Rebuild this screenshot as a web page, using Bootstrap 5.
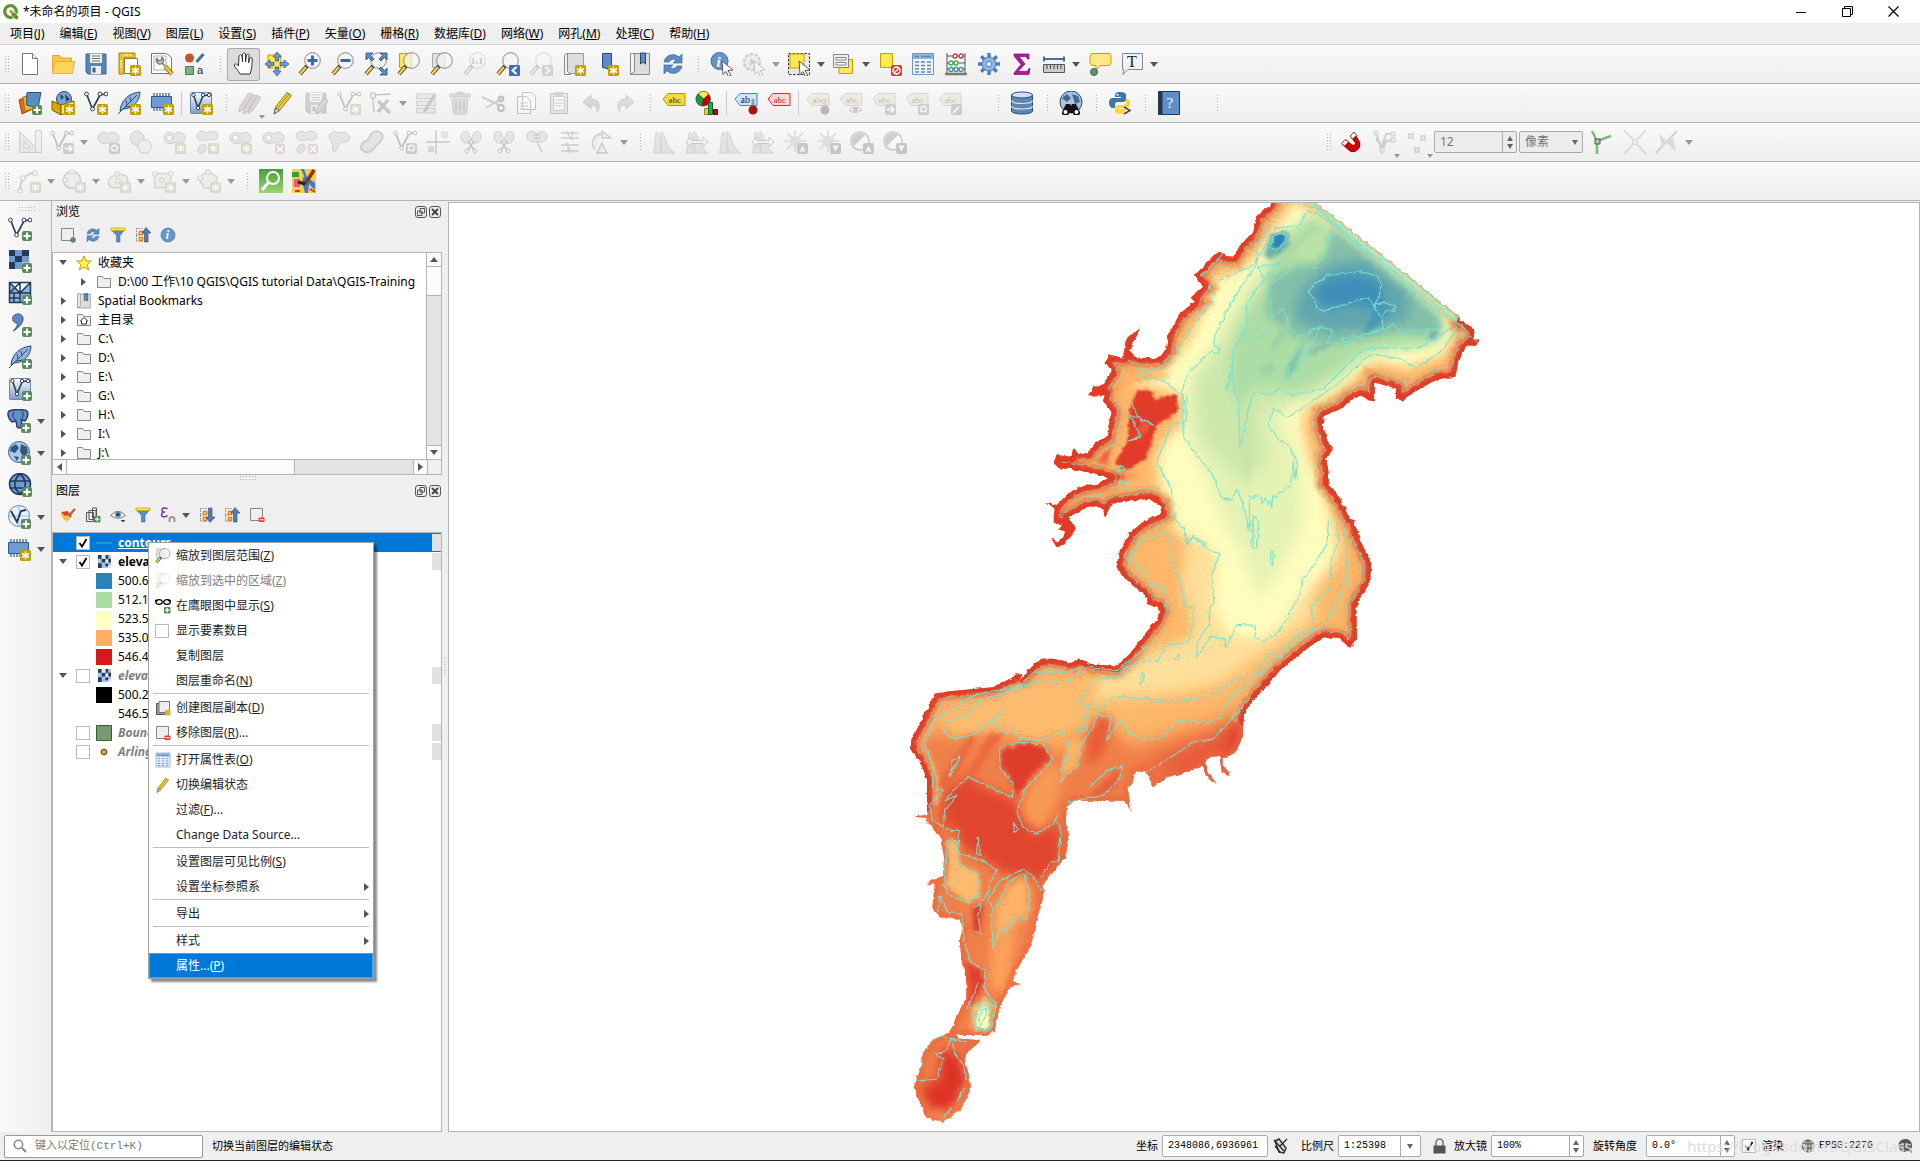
<!DOCTYPE html>
<html lang="zh-CN">
<head>
<meta charset="utf-8">
<meta name="viewport" content="width=device-width, initial-scale=1">
<title>*未命名的项目 - QGIS</title>
<link rel="stylesheet" href="https://cdn.jsdelivr.net/npm/bootstrap@5.3.0/dist/css/bootstrap.min.css">
<style>
body{font-family:"Noto Sans","Noto Sans CJK SC",sans-serif;font-size:12px;line-height:16px;color:#000;background:#efefef;overflow:hidden}
svg{display:block;flex:none}
button{color:inherit}
.title-strip{height:23px;background:#fff;padding-left:3px}
.win-btn{width:46px;height:20px;border:0;background:none}
.menu-strip{height:22px;gap:15px;padding:1px 0 0 10px;border-bottom:1px solid #d2d2d2}
.menu-strip a{color:#000;text-decoration:none}
.tool-strip{height:39px;background:linear-gradient(#fafafa,#eee);border-bottom:1px solid #b4b4b4}
.tool-set{display:flex;align-items:center}
.tool{width:33px;height:33px;border:0;background:none;padding:0;display:flex;align-items:center;justify-content:center;position:relative}
.tool.pressed{background:#dcdcdc;box-shadow:inset 0 0 0 1px #aaa;border-radius:3px}
.tool.with-menu{width:45px;justify-content:flex-start;padding-left:4px;gap:6px}
.tool svg.dim,.dim{opacity:.3;filter:grayscale(.75)}
.tri{width:0;height:0;border:4px solid transparent;border-top:5px solid #555;border-bottom:0;flex:none}
.tri.pale{border-top-color:#999}
.tri.corner{position:absolute;right:1px;bottom:1px;border-width:3px;border-top-width:4px;border-bottom:0}
.grip{width:16px;height:18px;background:radial-gradient(circle,#b0b0b0 1px,transparent 1px) 8px 0/3px 3px;background-clip:content-box;padding:0 4px 0 8px;flex:none}
.grip.first{width:13px;padding:0 4px 0 4px;background-position:4px 0}
.bar-gap{width:6px;height:24px;border-left:1px solid #ccc;margin-left:3px;margin-right:-3px;flex:none}
.tool-space{width:23px;flex:none}
.snap-set{margin-left:411px}
.spin-box{height:22px;border:1px solid #aaa;border-radius:2px;background:#fff;display:flex;align-items:stretch;overflow:hidden}
.spin-box input,.spin-box select{border:0;background:none;padding:0 0 0 5px;min-width:0;flex:1;outline:0;appearance:none;color:inherit;font-size:inherit}
.spin-box .ends{width:14px;border-left:1px solid #aaa;display:flex;flex-direction:column;align-items:center;justify-content:center;gap:3px;flex:none}
.spin-box .ends i{width:0;height:0;border:3px solid transparent;border-top:5px solid #666;border-bottom:0}
.spin-box .ends i:first-child:not(:last-child){border-top:0;border-bottom:5px solid #666}
.snap-set .spin-box{background:#ececec;color:#777;margin-right:2px}
.w-snap{width:83px}.w-unit{width:64px}
.w-unit .ends{border:0}
.side-strip{width:52px;background:linear-gradient(90deg,#fafafa,#eee);border-right:1px solid #b4b4b4;padding:12px 0 0 3px;position:relative}
.side-strip .tool{height:32px}
.hgrip{width:17px;height:5px;background:radial-gradient(circle,#b0b0b0 1px,transparent 1px) 0 0/3px 3px}
.side-strip .hgrip{position:absolute;left:18px;top:5px}
.docks{width:390px}
.dock-title{height:21px;padding:0 1px 0 4px}
.dock-title button{border:0;background:none;padding:0;margin-left:2px}
.dock-tools{height:26px;padding-left:8px;gap:9px;margin-bottom:4px}
.dock-tools.tall{height:28px;margin-bottom:3px}
.dock-tools button{border:0;background:none;padding:0;display:flex;align-items:center;gap:2px}
.tree-frame{border:1px solid #b4b4b4;background:#fff}
.tree-browser{height:223px}
.tree-row{height:19px;display:flex;align-items:center;white-space:nowrap}
.twist{width:20px;display:flex;justify-content:center;flex:none}
.twist:before{content:"";border:4px solid transparent;border-left:5px solid #555;border-right:0}
.twist.open:before{border:4px solid transparent;border-top:5px solid #555;border-bottom:0}
.twist.leaf:before{content:none}
.tree-row svg{margin:0 6px 0 3px}
.scroll-v{width:15px;background:#e4e4e4;border-left:1px solid #b4b4b4}
.scroll-h{height:15px;background:#e4e4e4;border-top:1px solid #b4b4b4}
.sb{background:#fafafa;width:14px;height:14px;display:flex;align-items:center;justify-content:center;flex:none}
.sb:before{content:"";border:4px solid transparent}
.sb.up{border-bottom:1px solid #b4b4b4}.sb.up:before{border-bottom:5px solid #555;border-top:0}
.sb.down{border-top:1px solid #b4b4b4}.sb.down:before{border-top:5px solid #555;border-bottom:0}
.sb.lf{border-right:1px solid #b4b4b4}.sb.lf:before{border-right:5px solid #555;border-left:0}
.sb.rt{border-left:1px solid #b4b4b4}.sb.rt:before{border-left:5px solid #555;border-right:0}
.sb-corner{width:14px;background:#efefef;border-left:1px solid #b4b4b4}
.thumb-v{height:29px;background:#fbfbfb;border-bottom:1px solid #b4b4b4}
.thumb-h{width:228px;background:#fbfbfb;border-right:1px solid #b4b4b4}
.tick{appearance:none;width:14px;height:14px;margin:0;border:1px solid #b8b8b8;background:#fff;flex:none}
.tick:checked{background:#fff url("data:image/svg+xml,%3Csvg xmlns='http://www.w3.org/2000/svg' viewBox='0 0 12 12'%3E%3Cpath d='M2.5 6l2.5 3.5L9.500 2' fill='none' stroke='%23000' stroke-width='1.800'/%3E%3C/svg%3E")}
.layer-row{height:19px;display:flex;align-items:center;white-space:nowrap}
.layer-row .tick{margin:0 6px 0 3px}
.layer-row .wide-ico{margin-right:6px}
.layer-row .small-ico{margin:0 7px 0 2px}
.layer-row .flagbox{width:9px;height:17px;background:#e2e2e2;margin-left:auto}
.layer-row.on{background:#0078d7;color:#fff;box-shadow:inset -1px 0 #2a8fe8}
.swatch{width:16px;height:16px;margin:0 6px 0 43px;flex:none}
.off-layer{color:#808080;font-weight:700;font-style:italic}
.ctx{position:absolute;left:95px;top:9px;width:226px;display:block;border:1px solid #a0a0a0;border-radius:0;padding:0;margin:0;font-size:12px;box-shadow:3px 3px 2px rgba(0,0,0,.45);background:#fff;z-index:5}
.ctx button{height:25px;width:100%;border:0;background:none;display:flex;align-items:center;padding:0 4px 0 6px;text-align:left}
.ctx .slot{width:16px;margin-right:5px;flex:none}
.ctx hr{margin:0 4px 1px;border-top:1px solid #bdbdbd;opacity:1}
.ctx button.hot{background:#0078d7;color:#fff;box-shadow:inset 0 0 0 1px #3ba3f5}
.ctx .sub{margin-left:auto;border:4px solid transparent;border-left:5px solid #555;border-right:0}
.splitter{width:6px;display:flex;align-items:center;justify-content:center}
.canvas-frame{border:1px solid #b4b4b4;background:#fff;min-width:0;margin-top:1px}
.work-area{min-height:0}
.status-strip{height:29px;padding-left:4px;border-bottom:1px solid #1d2b2b;font-size:11px;position:relative;color:#000}
.status-strip .val{font-family:"Liberation Mono","Noto Sans CJK SC",monospace;font-size:10px}
.find-box{width:199px;height:23px;border:1px solid #999;border-radius:2px;background:#fff;gap:8px;padding-left:8px}
.find-box input{border:0;outline:0;background:none;padding:0;width:150px;font:11px/16px "Liberation Mono","Noto Sans CJK SC",monospace}
.find-box input::placeholder{color:#777;opacity:1}
.w-coord{width:106px}.w-scale{width:83px}.w-scale .ends{width:20px!important}.w-mag{width:93px}.w-rot{width:89px}
.mark-text{position:absolute;right:8px;top:4px;font-size:15px;line-height:20px;color:rgba(190,190,190,.55);text-shadow:0 0 1px #fff;pointer-events:none}
</style>
</head>
<body class="vh-100 d-flex flex-column">

<svg width="0" height="0" class="position-absolute" aria-hidden="true"><defs>
<linearGradient id="bl" x1="0" y1="0" x2="0" y2="1"><stop offset="0" stop-color="#fff"/><stop offset="1" stop-color="#7a9cc6"/></linearGradient>
<linearGradient id="gn" x1="0" y1="0" x2="0" y2="1"><stop offset="0" stop-color="#4f9a3a"/><stop offset="1" stop-color="#9ad672"/></linearGradient>
<symbol id="star" viewBox="0 0 24 24"><rect x="13" y="13" width="11" height="11" rx="1.500" fill="#c4a000"/><path d="M18.500 14.500v8M15 16.500l7 4M22 16.500l-7 4" stroke="#fff" stroke-width="1.500"/></symbol>
<symbol id="plus" viewBox="0 0 24 24"><rect x="14" y="14" width="10" height="10" rx="2" fill="#5a8c5a"/><path d="M19 15.500v7M15.500 19h7" stroke="#fff" stroke-width="2"/></symbol>
<symbol id="del" viewBox="0 0 24 24"><rect x="14" y="14" width="10" height="10" rx="2" fill="#d88"/><path d="M16 16l6 6M22 16l-6 6" stroke="#fff" stroke-width="2"/></symbol>
<symbol id="bl1" viewBox="0 0 24 24"><rect x="13" y="13" width="11" height="11" rx="1" fill="#3f73b0"/><path d="M20.500 15l-4 3.500 4 3.500" fill="none" stroke="#fff" stroke-width="2"/></symbol>
<symbol id="br1" viewBox="0 0 24 24"><rect x="13" y="13" width="11" height="11" rx="1" fill="#888"/><path d="M16.500 15l4 3.500-4 3.500" fill="none" stroke="#fff" stroke-width="2"/></symbol>
<symbol id="mv" viewBox="0 0 24 24"><rect x="13" y="13" width="11" height="11" rx="2" fill="#777"/><path d="M14.500 18.500h7M19 15.500l3 3-3 3" fill="none" stroke="#fff" stroke-width="1.800"/></symbol>
<symbol id="rot" viewBox="0 0 24 24"><rect x="13" y="13" width="11" height="11" rx="2" fill="#777"/><path d="M17 21a3 3 0 1 1 3 0M20 21l-3-1" fill="none" stroke="#fff" stroke-width="1.600"/></symbol>
<symbol id="upb" viewBox="0 0 24 24"><rect x="13" y="13" width="11" height="11" rx="2" fill="#666"/><path d="M18.500 15.500l3 6h-6z" fill="#fff"/></symbol>
<symbol id="dnb" viewBox="0 0 24 24"><rect x="13" y="13" width="11" height="11" rx="2" fill="#666"/><path d="M18.500 21.500l3-6h-6z" fill="#fff"/></symbol>
<symbol id="no" viewBox="0 0 24 24"><rect x="13" y="13" width="11" height="11" rx="2" fill="#d33"/><circle cx="18.500" cy="18.500" r="3.500" fill="none" stroke="#fff" stroke-width="1.500"/><path d="M16 21l5-5" stroke="#fff" stroke-width="1.500"/></symbol>
<symbol id="cur" viewBox="0 0 24 24"><path d="M12 9l11 9-5 .5 3 5-2.500 1-2.500-5-3 3z" fill="#fff" stroke="#555"/></symbol>
<symbol id="pen1" viewBox="0 0 24 24"><rect x="13" y="13" width="11" height="11" rx="2" fill="#777"/><path d="M15 22l6-6" stroke="#fff" stroke-width="2"/></symbol>
<symbol id="pen2" viewBox="0 0 24 24"><path d="M12 23l1-6 7-10 4 3-7 10z" fill="#999" stroke="#444"/></symbol>
<symbol id="eye1" viewBox="0 0 24 24"><path d="M10 19q6-6 13 0-7 5-13 0z" fill="#fff" stroke="#555"/><circle cx="16.500" cy="18.500" r="2.500" fill="#667"/></symbol>
<symbol id="thm" viewBox="0 0 24 24"><path d="M19 8v8" stroke="#999" stroke-width="3"/><circle cx="19" cy="19" r="4.500" fill="#a11"/></symbol>

<symbol id="page" viewBox="0 0 24 24"><path d="M4.500 1.500h10l5 5v16h-15z" fill="#fff" stroke="#777"/><path d="M14.500 1.500v5h5" fill="#eee" stroke="#777"/></symbol>
<symbol id="open" viewBox="0 0 24 24"><path d="M1.500 21V3.500h7l2 2.500h10v4" fill="#f6c744" stroke="#e0ac2b"/><path d="M1.500 21.500l3-12h19l-2 12z" fill="#ffd65c" stroke="#e5b53a"/></symbol>
<symbol id="save" viewBox="0 0 24 24"><path d="M2 2h20v20H4l-2-2z" fill="#5b84b1" stroke="#3d6392"/><path d="M6 2h12v9H6z" fill="#f4f4f4"/><path d="M7.500 4h9M7.500 6.500h9M7.500 9h9" stroke="#777"/><path d="M7 14h10v8H7z" fill="#eee"/><path d="M8.500 15.500h3v5h-3z" fill="#3d6392"/></symbol>
<symbol id="lay" viewBox="0 0 24 24"><path d="M7.500 6.500h13v15h-13z" fill="#fff" stroke="#777"/><path d="M2 1h16v5H7v16H2z" fill="#e9c334" stroke="#a98600"/><path d="M7 2v2M10 2v2M13 2v2M3 9h2M3 12h2M3 15h2" stroke="#fff"/></symbol>
<symbol id="rep" viewBox="0 0 24 24"><path d="M1.500 1.500h15l5 4v16h-20z" fill="#fff" stroke="#777"/><path d="M4 4h12v14H4z" fill="none" stroke="#9bb4d4"/><path d="M7 6.500a3.500 3.500 0 1 0 5-1l-1 3-2.500.5zM12 11l4 4" fill="#ddd" stroke="#777" stroke-width="1.500"/><path d="M15 14l7 8" stroke="#8a6a10" stroke-width="4.500"/><path d="M15 14l7 8" stroke="#e9c334" stroke-width="3"/></symbol>
<symbol id="sty" viewBox="0 0 24 24"><circle cx="6.500" cy="6" r="4.500" fill="#c8502b"/><path d="M13.500 10l7-8" stroke="#44719f" stroke-width="3"/><path d="M2.500 14.500h8v8h-8z" fill="#7fb082" stroke="#4a7a4c"/><text x="14" y="22" font-size="11" font-family="Liberation Sans" fill="#222">a</text></symbol>
<symbol id="hand" viewBox="0 0 24 24"><path d="M8 22c-2-4-5-6-6-9 1-2 3-1 4.500 1L7 4c1-2 3-1 3 0l.5 6V2c1-1.500 3-1 3 0v8l1-7c1-1.500 3-1 2.500.5L16.500 11l1.500-5c1-1 2.500-.5 2.300.8C20 12 20 17 18 22z" fill="#fff" stroke="#333"/></symbol>
<symbol id="pan" viewBox="0 0 24 24"><path d="M3 3h13v13H3z" fill="#fce94f" stroke="#c4a000"/><path d="M12 0l4 5h-2.500v4h-3V5H8zM12 24l4-5h-2.500v-4h-3v4H8zM0 12l5-4v2.500h4v3H5V16zM24 12l-5-4v2.500h-4v3h4V16z" fill="#6f9bd0" stroke="#30588c" stroke-width=".8"/></symbol>
<symbol id="lens" viewBox="0 0 24 24"><path d="M9 14l-7 8" stroke="#333" stroke-width="4"/><path d="M8 15l-6 7" stroke="#fcd04b" stroke-width="2.500"/><circle cx="14.500" cy="8.500" r="7.800" fill="#f4f4f4" fill-opacity=".7" stroke="#888"/></symbol>
<symbol id="zin" viewBox="0 0 24 24"><path d="M14.500 3.500v10M9.500 8.500h10" stroke="#2f6bb0" stroke-width="3"/></symbol>
<symbol id="zout" viewBox="0 0 24 24"><path d="M9.500 8.500h10" stroke="#2f6bb0" stroke-width="3"/></symbol>
<symbol id="z11" viewBox="0 0 24 24"><text x="8" y="12" font-size="9" font-family="Liberation Serif" font-weight="700" fill="#444">1:1</text></symbol>
<symbol id="full" viewBox="0 0 24 24"><path d="M2 1h7L6.500 3.500 10 7 8 9 4.500 5.500 2 8zM23 1v7l-2.500-2.500L17 9l-2-2 3.500-3.500L16 1zM23 23h-7l2.500-2.500L15 17l2-2 3.500 3.500L23 16z" fill="#5d8cc4" stroke="#244b78" stroke-width=".8"/></symbol>
<symbol id="ysq" viewBox="0 0 24 24"><path d="M2.500 1.500h12v14h-12z" fill="#fce94f" stroke="#c4a000"/></symbol>
<symbol id="gsq" viewBox="0 0 24 24"><path d="M2.500 1.500h12v14h-12z" fill="#e2e2e2" stroke="#aaa"/></symbol>
<symbol id="map" viewBox="0 0 24 24"><path d="M5.500 1.500h16v20h-16z" fill="#ddd" stroke="#999"/><path d="M2.500 3.500q0-2 3-2v18l3 3h-6z" fill="#f4f4f4" stroke="#888"/></symbol>
<symbol id="bkm" viewBox="0 0 24 24"><path d="M7.500 1.500h9v19l-4.500-4-4.500-1z" fill="#5d8cc4" stroke="#244b78"/></symbol>
<symbol id="book" viewBox="0 0 24 24"><path d="M2.500 1.500h19v21h-19z" fill="#ddd" stroke="#888"/><path d="M2.500 1.500h4v18l-4 3z" fill="#f4f4f4" stroke="#888"/><path d="M12.500 1v11l2.500-2 2.500 2V1z" fill="#5d8cc4" stroke="#244b78"/></symbol>
<symbol id="ref" viewBox="0 0 24 24"><path d="M3 10A9 9 0 0 1 18 5l3-3v9h-9l3-3a5 5 0 0 0-7 2zM21 14a9 9 0 0 1-15 5l-3 3v-9h9l-3 3a5 5 0 0 0 7-2z" fill="#5d8cc4" stroke="#3d6ca5" stroke-width=".7"/></symbol>
<symbol id="info" viewBox="0 0 24 24"><circle cx="9.500" cy="9" r="8.500" fill="#6795c8" stroke="#3d6ca5"/><text x="6.500" y="14.500" font-size="15" font-style="italic" font-weight="700" font-family="Liberation Serif" fill="#fff">i</text></symbol>
<symbol id="infoc" viewBox="0 0 24 24"><circle cx="12" cy="12" r="10.500" fill="#6795c8" stroke="#3d6ca5"/><text x="8.500" y="18.500" font-size="18" font-style="italic" font-weight="700" font-family="Liberation Serif" fill="#fff">i</text></symbol>
<symbol id="act" viewBox="0 0 24 24"><circle cx="10" cy="10" r="8" fill="#ddd" stroke="#777" stroke-width="2.500" stroke-dasharray="3.500 1.500"/><path d="M8 6l6 4-6 4z" fill="#777"/></symbol>
<symbol id="sel" viewBox="0 0 24 24"><path d="M1.500 1.500h21v21h-21z" fill="#e8e8e8" stroke="#333" stroke-dasharray="2.500 1.500"/><path d="M3 2h14v14H3z" fill="#fce94f" stroke="#c4a000"/></symbol>
<symbol id="form" viewBox="0 0 24 24"><path d="M7 7.500h13.500v14H7z" fill="#fce94f" stroke="#c4a000"/><path d="M1.500 2.500h15v13h-15z" fill="#eee" stroke="#888"/><path d="M4 5.500h10v2.500H4zM4 10.500h10V13H4z" fill="#fff" stroke="#888"/></symbol>
<symbol id="tab" viewBox="0 0 24 24"><path d="M1.500 1.500h21v21h-21z" fill="#eef4fb" stroke="#6795c8"/><path d="M2 2h20v5H2z" fill="#8fb5df"/><path d="M4 10h4M10 10h4M16 10h4M4 13.500h4M10 13.500h4M16 13.500h4M4 17h4M10 17h4M16 17h4M4 20h4M10 20h4M16 20h4M4 4.500h4M10 4.500h10" stroke="#5d86b5" stroke-width="1.300"/></symbol>
<symbol id="aba" viewBox="0 0 24 24"><path d="M3 1v21M21 1v21M3 4h18M3 11h18M3 17h18" stroke="#555" fill="none"/><path d="M1 22h22" stroke="#777" stroke-width="2.500"/><g fill="#fff" stroke-width="1.300"><g stroke="#c33"><circle cx="11" cy="4" r="2"/><circle cx="17" cy="4" r="2"/></g><g stroke="#4a4"><circle cx="7" cy="11" r="2"/><circle cx="12" cy="11" r="2"/></g><g stroke="#48a"><circle cx="7" cy="17.500" r="2"/><circle cx="12" cy="17.500" r="2"/><circle cx="17" cy="17.500" r="2"/></g></g></symbol>
<symbol id="gear" viewBox="0 0 24 24"><path d="M12 1v22M1 12h22M4.200 4.200l15.600 15.600M19.800 4.200L4.200 19.800" stroke="#4f7fb8" stroke-width="3.500"/><circle cx="12" cy="12" r="7" fill="#8db3df" stroke="#4f7fb8"/><circle cx="12" cy="12" r="2.500" fill="#fff" stroke="#4f7fb8"/></symbol>
<symbol id="sig" viewBox="0 0 24 24"><path d="M4 2h15v5h-1.500L16 4.500H9L15 12l-7 7.500h9l2-3h1L19 22.500H4V21l7-8.500L4 4z" fill="#b5179e" stroke="#7a0f6b" stroke-width=".7"/></symbol>
<symbol id="rul" viewBox="0 0 24 24"><path d="M2 7h20M2 4.500v5M22 4.500v5" stroke="#446e9e" stroke-width="2"/><path d="M1.500 12.500h21v8h-21z" fill="#ccc" stroke="#555"/><path d="M5 13v4M8.500 13v4M12 13v4M15.500 13v4M19 13v4" stroke="#444"/></symbol>
<symbol id="tip" viewBox="0 0 24 24"><path d="M5 1.500h16q2 0 2 2v7q0 3-3 3h-8l-4 5v-5H5q-3 0-3-3v-6q0-3 3-3z" fill="#fce986" stroke="#c4a000"/><circle cx="6" cy="20" r="3.500" fill="#5f9560" stroke="#466"/></symbol>
<symbol id="txt" viewBox="0 0 24 24"><path d="M2.500 1.500h20v16H8l-5 5 1-5H2.500z" fill="#edf3fa" stroke="#888"/><text x="7" y="15" font-size="16" font-family="Liberation Serif" fill="#222">T</text></symbol>

<symbol id="dsm" viewBox="0 0 24 24"><path d="M1 9l10-5 4 14-11 5z" fill="#d96d1b" stroke="#a04c0f"/><path d="M5 6l10-3 3 14-11 3z" fill="#f0b429" stroke="#a87b10"/><path d="M9 1.500h14L20 17 8.500 14z" fill="#5d8cc4" stroke="#2c5383"/></symbol>
<symbol id="pkg" viewBox="0 0 24 24"><circle cx="13" cy="8" r="7.500" fill="#7da3d0" stroke="#446"/><path d="M9 3l4 3-3 3zM14 3l5 5-4 3z" fill="#244b78"/><path d="M1 10l9 4v10l-9-5z" fill="#d8a800" stroke="#7a6000"/><path d="M10 14l13-4v9l-13 5z" fill="#fce94f" stroke="#7a6000"/></symbol>
<symbol id="vee" viewBox="0 0 24 24"><path d="M2.500 3l6 15L16 4l6-1" fill="none" stroke="#2c4257" stroke-width="1.700"/><g fill="#fff" stroke="#2c4257"><circle cx="2.500" cy="3" r="1.900"/><circle cx="8.500" cy="18" r="1.900"/><circle cx="16" cy="3" r="1.900"/><circle cx="22" cy="3" r="1.900"/></g></symbol>
<symbol id="fea" viewBox="0 0 24 24"><path d="M3 20C4 9 12 2 23 1c0 8-6 17-17 17z" fill="#8fb3dc" stroke="#2c4f78"/><path d="M1 23L20 4M9 9l1 5M13 6l1 5M8 16l7-1" fill="none" stroke="#2c4f78"/></symbol>
<symbol id="chip" viewBox="0 0 24 24"><path d="M4 2v18M7 2v18M10 2v18M13 2v18M16 2v18M19 2v18" stroke="#466c97" stroke-width="1.400"/><path d="M1.500 5.500h20v11h-20z" fill="#6f9bd0" stroke="#30588c"/></symbol>
<symbol id="vbox" viewBox="0 0 24 24"><rect x="1.500" y="1.500" width="21" height="21" rx="1" fill="url(#bl)" stroke="#6688ae"/><path d="M4.500 4l4.500 13L14 5l6-1.500" fill="none" stroke="#2c4257" stroke-width="1.600"/><g fill="#fff" stroke="#2c4257"><circle cx="4.500" cy="4" r="1.700"/><circle cx="9" cy="17" r="1.700"/><circle cx="14" cy="4" r="1.700"/><circle cx="20" cy="4" r="1.700"/></g></symbol>
<symbol id="pen" viewBox="0 0 24 24"><path d="M3 23l1.500-7L16 1.500l4.500 3L9 19z" fill="#e8cf3c" stroke="#8c7a1a"/><path d="M6.500 17.500L18 3" stroke="#a38d16"/><path d="M3 23l1.500-6 4 2.500z" fill="#ddd" stroke="#666"/></symbol>
<symbol id="pens" viewBox="0 0 24 24"><path d="M1 21l1-6L11 1.500l4 2.500L6 18zM5 23l1-6L15 3l4 2.500L10 20zM10 23l1-6L19 4l4 2.500L15 19z" fill="#b88" stroke="#755"/></symbol>
<symbol id="vtx" viewBox="0 0 24 24"><path d="M5 21L3.500 4l18-1" fill="none" stroke="#555" stroke-width="1.300"/><path d="M1.500 2h5v5h-5z" fill="#ddd" stroke="#555"/><path d="M9 10l12 12M19 9L9 21" stroke="#666" stroke-width="3.500"/></symbol>
<symbol id="att" viewBox="0 0 24 24"><path d="M1.500 3h19v4.500h-19zM1.500 10h19v4.500h-19zM1.500 17h19v5h-19z" fill="#bda" stroke="#776"/><path d="M9 21L20 3" stroke="#666" stroke-width="3"/></symbol>
<symbol id="bin" viewBox="0 0 24 24"><path d="M4 8h16l-1.500 15h-13z" fill="#baa" stroke="#866"/><path d="M2 3h20v3H2zM9 1h6v2H9z" fill="#b99" stroke="#866"/><path d="M8 10v10M12 10v10M16 10v10" stroke="#855" stroke-width="1.500"/></symbol>
<symbol id="cut" viewBox="0 0 24 24"><path d="M1 6l17 8M5 17L22 7" stroke="#777" stroke-width="2"/><circle cx="20" cy="17" r="3" fill="none" stroke="#444" stroke-width="1.800"/><circle cx="20" cy="8" r="2.500" fill="none" stroke="#444" stroke-width="1.800"/></symbol>
<symbol id="cpy" viewBox="0 0 24 24"><path d="M8.500 1.500h9l4 4v13h-13zM3.500 5.500h9l4 4v13h-13z" fill="#fff" stroke="#555"/><path d="M6 12h8M6 15h8M6 18h8" stroke="#777"/></symbol>
<symbol id="pst" viewBox="0 0 24 24"><path d="M3.500 2.500h17v20h-17z" fill="#ccc" stroke="#555"/><path d="M6.500 5.500h11v14h-11z" fill="#fff" stroke="#777"/><path d="M8 1h8v4H8z" fill="#888"/><path d="M8 9h8M8 12h8M8 15h6" stroke="#777"/></symbol>
<symbol id="undo" viewBox="0 0 24 24"><path d="M3 11l8-7v4c9 0 10 7 6 13 1-6-2-7-6-7v4z" fill="#b98a70" stroke="#865"/></symbol>
<symbol id="redo" viewBox="0 0 24 24"><path d="M21 11l-8-7v4C4 8 3 15 7 21c-1-6 2-7 6-7v4z" fill="#9a9" stroke="#686"/></symbol>
<symbol id="abc" viewBox="0 0 24 24"><path d="M1 8l5-5.500h17v12H6z" fill="#f5dc3e" stroke="#b39600"/><text x="6.500" y="12" font-size="9" font-family="Liberation Serif" fill="#333">abc</text></symbol>
<symbol id="abb" viewBox="0 0 24 24"><path d="M1 8l5-5.500h17v12H6z" fill="#cfe4ff" stroke="#3f86d8"/><text x="6.500" y="12" font-size="10" font-family="Liberation Serif" fill="#223">ab</text></symbol>
<symbol id="abr" viewBox="0 0 24 24"><path d="M1 8l5-5.500h17v12H6z" fill="#ffd6d6" stroke="#e22"/><text x="6.500" y="12" font-size="9" font-family="Liberation Serif" fill="#c22">abc</text></symbol>
<symbol id="pie" viewBox="0 0 24 24"><circle cx="8.500" cy="8" r="7" fill="#c00" stroke="#333" stroke-width=".6"/><path d="M8.500 8L3 3a7 7 0 0 1 11 0z" fill="#fce94f" stroke="#333" stroke-width=".6"/><path d="M8.500 8L3 3a7 7 0 0 0 4 12z" fill="#1a9c3c" stroke="#333" stroke-width=".6"/><path d="M9.500 17.500h4v6h-4z" fill="#fcd000" stroke="#975"/><path d="M13.500 11.500h4v12h-4z" fill="#1ab33c" stroke="#063"/><path d="M18.500 18.500h4v5h-4z" fill="#c00" stroke="#600"/></symbol>
<symbol id="db" viewBox="0 0 24 24"><path d="M1.500 4v16c0 4 21 4 21 0V4z" fill="#5f86b3" stroke="#2f4f75"/><path d="M1.500 9.500c0 4 21 4 21 0M1.500 15c0 4 21 4 21 0" fill="none" stroke="#dce8f5" stroke-width="1.200"/><ellipse cx="12" cy="4" rx="10.500" ry="3" fill="#cfdff0" stroke="#2f4f75"/></symbol>
<symbol id="msr" viewBox="0 0 24 24"><circle cx="12" cy="11" r="11" fill="#a9c3e2" stroke="#345"/><path d="M3 7l5-4 4 4-4 4zM13 3l6 2 2 6-5 2zM4 13l4 2" fill="#44678f"/><path d="M7 13h4l1 2 1-2h4l4 8a3.500 3.500 0 1 1-7 1h-4a3.500 3.500 0 1 1-7-1z" fill="#111"/><circle cx="6.500" cy="21" r="2" fill="#fff"/><circle cx="17.500" cy="21" r="2" fill="#fff"/></symbol>
<symbol id="py" viewBox="0 0 24 24"><path d="M12 1c-5 0-5 2-5 5h6v1H4c-4 0-4 9 0 10h3v-3c0-3 2-3 4-3h4c2 0 3-1 3-3V4c0-2-2-3-6-3z" fill="#3c77ac"/><path d="M12 23c5 0 5-2 5-5h-6v-1h8c4 0 4-8 1-9h-2v3c0 3-2 3-4 3h-4c-2 0-3 1-3 3v3c0 2 2 3 5 3z" fill="#ffd23f"/><circle cx="9.500" cy="3.800" r="1" fill="#fff"/><path d="M16 16l6 3.500-6 3.500" fill="none" stroke="#444" stroke-width="1.500"/></symbol>
<symbol id="help" viewBox="0 0 24 24"><path d="M1.500.5h21v23h-21z" fill="#5f8fc8" stroke="#233a55"/><path d="M1.500.5h4v23h-4z" fill="#24384f"/><text x="9.500" y="17" font-size="15" font-family="Liberation Serif" fill="#fff">?</text></symbol>

<symbol id="tri" viewBox="0 0 24 24"><path d="M1.500 1.500v21h21z" fill="#dcc9bb" stroke="#876"/><path d="M6 12v6h6z" fill="#fff" stroke="#876"/><path d="M17.500.5h6v22h-6z" fill="#eee0c0" stroke="#876"/></symbol>
<symbol id="bean" viewBox="0 0 24 24"><path d="M2 8c0-6 7-7 10-4 4-3 11-2 11 4 0 5-6 6-9 4-4 3-12 2-12-4z" fill="#b9c6b4" stroke="#6c7a68"/></symbol>
<symbol id="ringb" viewBox="0 0 24 24"><path d="M2 8c0-6 7-7 10-4 4-3 11-2 11 4 0 5-6 6-9 4-4 3-12 2-12-4z" fill="#b9c6b4" stroke="#6c7a68"/><circle cx="7.500" cy="8" r="3" fill="#fff" stroke="#6c7a68"/></symbol>
<symbol id="beans" viewBox="0 0 24 24"><path d="M2 6c0-5 7-6 10-3 4-3 11-2 11 3 0 4-6 5-9 3-4 3-12 2-12-3zM6 23c-3 0-4-3-2-6s6-3 7-1-1 7-5 7z" fill="#b9c6b4" stroke="#6c7a68"/></symbol>
<symbol id="hexs" viewBox="0 0 24 24"><circle cx="8" cy="8" r="7" fill="#b9c6b4" stroke="#6c7a68"/><path d="M12 10h7l4 6-4 7h-7l-4-7z" fill="#dfe4dc" stroke="#6c7a68"/></symbol>
<symbol id="resh" viewBox="0 0 24 24"><path d="M2 6c2-6 8-4 11-3 5-3 12 3 9 7-4 4-8 0-10 5s-4 8-6 6 2-7-2-9z" fill="#b9c6b4" stroke="#6c7a68"/></symbol>
<symbol id="offc" viewBox="0 0 24 24"><path d="M12 3c5-4 13 0 10 6s-5 4-7 8-8 7-12 4-1-9 3-10 3-5 6-8z" fill="#b9c6b4" stroke="#6c7a68" stroke-width="2"/></symbol>
<symbol id="scis" viewBox="0 0 24 24"><path d="M2 6c0-6 8-6 8-1l2 5-3 3c-4 1-7-2-7-7zM22 6c0-6-8-6-8-1l-2 5 3 3c4 1 7-2 7-7z" fill="#b9c6b4" stroke="#6c7a68"/><path d="M9 11l6 9M15 11l-6 9" stroke="#555" stroke-width="1.500"/><circle cx="8" cy="21" r="2" fill="none" stroke="#a44"/><circle cx="16" cy="21" r="2" fill="none" stroke="#a44"/></symbol>
<symbol id="merg" viewBox="0 0 24 24"><path d="M2 6c0-6 8-6 10-2 2-4 10-4 10 2s-6 8-10 5c-4 2-10 1-10-5z" fill="#b9c6b4" stroke="#6c7a68"/><path d="M12 12l5 10M9 5h6M9 8h6" stroke="#666" stroke-width="1.500"/></symbol>
<symbol id="mlin" viewBox="0 0 24 24"><path d="M3 3h18M3 8h18M3 15h18M3 21h18M8 1l6 9M8 13l6 10M14 1v9M10 13v10" stroke="#777" fill="none" stroke-width="1.300"/></symbol>
<symbol id="rsym" viewBox="0 0 24 24"><path d="M5 20C-1 11 5 4 12 4M12 1v7l9 0zM12 13l5 10H7z" fill="#ddd" stroke="#666" stroke-width="1.300"/></symbol>
<symbol id="spli" viewBox="0 0 24 24"><path d="M0 12h24M10 0v24" stroke="#666" stroke-width="1.500"/><path d="M2 16h6v6H2z" fill="#c88"/><path d="M15 1h7v7h-7z" fill="#bb8"/></symbol>
<symbol id="hist" viewBox="0 0 24 24"><path d="M1.500 23C3 18 3 8 4 3c3-5 5 8 6 20zM9 23V1c5 4 5 18 14 22z" fill="#b4c4ae" stroke="#987"/></symbol>
<symbol id="harr" viewBox="0 0 24 24"><path d="M1 12l5-5v3.500h12V7l5 5-5 5v-3.500H6V17z" fill="#eee" stroke="#666"/></symbol>
<symbol id="sun" viewBox="0 0 24 24"><path d="M11 0v22M0 11h22M3 3l16 16M19 3L3 19" stroke="#a99b50" stroke-width="1.600"/><circle cx="11" cy="11" r="5.500" fill="#b9b06a"/></symbol>
<symbol id="con" viewBox="0 0 24 24"><circle cx="10" cy="11" r="9" fill="#fff" stroke="#666" stroke-width="1.500"/><path d="M10 3a8 8 0 0 0-6 13L15 5a8 8 0 0 0-5-2z" fill="#777"/></symbol>
<symbol id="mag" viewBox="0 0 24 24"><path d="M14 3l5 8c3 5-2 13-9 10L2 14l4-4 6 5c3 1 4-1 3-3l-4-5z" fill="#d40000" stroke="#800"/><path d="M10 6l4-4 2.500 3.500-4 3.500zM1.500 13.500l4-4 3 2.500-4 4z" fill="#fff" stroke="#a00" stroke-width=".8"/></symbol>
<symbol id="dots" viewBox="0 0 24 24"><path d="M3 4h4v4H3zM15 6h4v4h-4zM9 18h4v4H9z" fill="#ddd" stroke="#777" stroke-width="1.500"/></symbol>
<symbol id="vees" viewBox="0 0 24 24"><path d="M3 2l6 20 4-11 8-1M3 9l6 7 4-12h8" fill="none" stroke="#777" stroke-width="2"/><path d="M1 1h4v4H1zM7 18h4v4H7zM18 2h4v4h-4zM18 8h4v4h-4z" fill="#ddd" stroke="#777"/></symbol>
<symbol id="topo" viewBox="0 0 24 24"><path d="M2 1l5 10v13M7 11l14-5" fill="none" stroke="#7cba7c" stroke-width="2.500"/><path d="M5 9h5v5H5z" fill="#bbb" stroke="#555"/></symbol>
<symbol id="cross" viewBox="0 0 24 24"><path d="M1 0l22 24M23 0L1 24" stroke="#999" stroke-width="1.800"/><circle cx="12" cy="12" r="2.500" fill="#eee" stroke="#888"/></symbol>
<symbol id="self" viewBox="0 0 24 24"><path d="M1 23L22 1" stroke="#888" stroke-width="2"/><path d="M4 3l3 14 5-4 9 9-3-14-6 4z" fill="#a9a077"/></symbol>
<symbol id="curv" viewBox="0 0 24 24"><path d="M3 22C3 12 8 4 18 4" fill="none" stroke="#777" stroke-width="2"/><path d="M1 20h4v4H1zM4 7h4v4H4zM16 2h4v4h-4z" fill="#fff" stroke="#777"/></symbol>
<symbol id="circ" viewBox="0 0 24 24"><circle cx="10" cy="11" r="8.500" fill="#ddd" stroke="#888" stroke-width="2"/><path d="M8 1h4v4H8zM1 9h4v4H1z" fill="#fff" stroke="#777"/></symbol>
<symbol id="ell" viewBox="0 0 24 24"><ellipse cx="11" cy="12" rx="10" ry="6.500" fill="#ddd" stroke="#888" stroke-width="1.500" transform="rotate(-15 11 12)"/><path d="M9 10h4v4H9zM8 3h4v4H8z" fill="#fff" stroke="#777"/></symbol>
<symbol id="rec" viewBox="0 0 24 24"><path d="M2.500 4.500h16v14h-16z" fill="#ddd" stroke="#888" stroke-width="1.500"/><path d="M8 9h4v4H8zM1 3h4v4H1zM17 3h4v4h-4z" fill="#fff" stroke="#777"/></symbol>
<symbol id="poly" viewBox="0 0 24 24"><path d="M11 2l9 6-2 11H7L2 9z" fill="#ddd" stroke="#888" stroke-width="1.500"/><path d="M9 1h4v4H9zM1 7h4v4H1z" fill="#fff" stroke="#777"/></symbol>
<symbol id="grn" viewBox="0 0 24 24"><path d="M0 0h24v24H0z" fill="url(#gn)"/><circle cx="14" cy="9" r="6" fill="none" stroke="#fff" stroke-width="2"/><path d="M10 13l-7 8" stroke="#fff" stroke-width="3"/></symbol>
<symbol id="osm" viewBox="0 0 24 24"><path d="M0 0h24v24H0z" fill="#f6ce43"/><path d="M0 3h7v5H0z" fill="#3a9c3a"/><path d="M2 10h6v8H2z" fill="#e8538a"/><path d="M9 0l3 7-2 5 3 12h3l1-9 6 6v-7l-8-6L12 0z" fill="#3e78d8"/><path d="M22 1l-9 14" stroke="#8a3515" stroke-width="3.500"/><path d="M6 13l7 2" stroke="#222" stroke-width="3"/><path d="M3 22h5M18 20l5 3" stroke="#d33" stroke-width="2"/></symbol>

<symbol id="ras" viewBox="0 0 24 24"><path d="M1 1h20v19H1z" fill="#6f9bd0"/><path d="M1 1h6v6H1zM14 1h7v6h-7zM7 7h7v6H7zM1 13h6v7H1z" fill="#22395a"/><path d="M14 13h7v7h-7z" fill="#a9c3e2"/></symbol>
<symbol id="mesh" viewBox="0 0 24 24"><path d="M1.500 1.500h21v20h-21zM1.500 12h21M12 1.500v20M1.500 1.500L12 12 22.500 1.500M12 1.500L1.500 12M6 12v9M1.500 17H12" fill="#8fb3dc" stroke="#22395a" stroke-width="1.500"/></symbol>
<symbol id="com" viewBox="0 0 24 24"><path d="M10 1c7 0 8 10-5 17 4-4 5-6 4-8-6 0-6-9 1-9z" fill="#5d8cc4" stroke="#2c4f78"/></symbol>
<symbol id="ele" viewBox="0 0 24 24"><path d="M2 2c4-2 15-2 18 0 2 3 0 8-2 10l-3-1-1 7q-2 2-4 0l-1-6-4 1C1 10 0 4 2 2z" fill="#5f8fc8" stroke="#22395a" stroke-width="1.400"/><path d="M7 2c-2 4-1 8 2 9M15 2c2 4 1 8-2 9" fill="none" stroke="#22395a"/></symbol>
<symbol id="globe" viewBox="0 0 24 24"><circle cx="12" cy="11" r="10.500" fill="#a9c8ea" stroke="#3d6392"/><path d="M4 6l5-3 3 4-4 5-5-2zM14 3l6 3 1 6-5 4-3-6zM7 15l5 1-2 4z" fill="#35567d"/></symbol>
<symbol id="wcs" viewBox="0 0 24 24"><circle cx="12" cy="11" r="10.500" fill="#6f9bd0" stroke="#22395a" stroke-width="1.500"/><path d="M1.500 8h21M1.500 15h21M12 1c-7 6-7 14 0 20M12 1c7 6 7 14 0 20" fill="none" stroke="#22395a" stroke-width="1.700"/></symbol>
<symbol id="wfs" viewBox="0 0 24 24"><circle cx="12" cy="11" r="10.500" fill="#eaf2fb" stroke="#5d8cc4"/><path d="M1.500 11h21M12 1v20" stroke="#9bbce0"/><path d="M4 6l6 11L14 6l5-1" fill="none" stroke="#22395a" stroke-width="1.800"/></symbol>

<symbol id="fold" viewBox="0 0 16 16"><path d="M1.500 13.500v-11h5l1.500 2h6.500v9z" fill="#efefef" stroke="#888"/></symbol>
<symbol id="home" viewBox="0 0 16 16"><path d="M1.500 13.500v-11h5l1.500 2h6.500v9z" fill="#efefef" stroke="#888"/><path d="M4.500 9L8 5.500 11.500 9h-1v3h-5V9z" fill="#fff" stroke="#333"/></symbol>
<symbol id="fav" viewBox="0 0 16 16"><path d="M8 .8l2 5 5.300.3-4 3.500 1.300 5.400L8 12l-4.600 3 1.300-5.400-4-3.500L6 5.800z" fill="#fdf04f" stroke="#c4a000"/></symbol>
<symbol id="sqp" viewBox="0 0 16 16"><path d="M1.500 1.500h12v12h-12z" fill="#eee" stroke="#888"/><circle cx="13" cy="13" r="2.800" fill="#5a8c5a"/></symbol>
<symbol id="sqm" viewBox="0 0 16 16"><path d="M1.500 1.500h12v12h-12z" fill="#eee" stroke="#888"/><rect x="9.500" y="10.500" width="6" height="4.500" rx="1" fill="#e33"/><path d="M10.500 12.800h4" stroke="#fff"/></symbol>
<symbol id="fun" viewBox="0 0 16 16"><path d="M1 2.500h14L10 8.500v6.500H6.500V8.500z" fill="#5d8cc4" stroke="#3d6ca5" stroke-width=".6"/><path d="M1 1h14v2.500H1z" fill="#fce94f" stroke="#c4a000" stroke-width=".7"/></symbol>
<symbol id="col" viewBox="0 0 16 16"><path d="M1 1.500h7M1.500 1v13M1 8h5M1 14h7" stroke="#888" stroke-dasharray="1.500 1"/><path d="M4.500 4.500h3v3h-3zM4.500 10.500h3v3h-3z" fill="#fff" stroke="#f57900" stroke-width="1.500"/><path d="M11 .5l5 5.500h-3v9H9.500V6H7z" fill="#4f7fb8" stroke="#244b78" stroke-width=".6"/></symbol>
<symbol id="exp" viewBox="0 0 16 16"><path d="M1 1.500h7M1.500 1v13M1 8h5M1 14h7" stroke="#888" stroke-dasharray="1.500 1"/><path d="M4.500 4.500h3v3h-3zM4.500 10.500h3v3h-3z" fill="#fff" stroke="#f57900" stroke-width="1.500"/><path d="M11 15.500l5-5.500h-3V1H9.500v9H7z" fill="#4f7fb8" stroke="#244b78" stroke-width=".6"/></symbol>
<symbol id="brush" viewBox="0 0 16 16"><path d="M1 6l6-1 4 5-4 5C4 13 1 10 1 6z" fill="#f0c24a"/><path d="M1 5l7-1 1 4-4 1z" fill="#d9432b"/><path d="M8 6l3 4M9.500 8l5.500-6" stroke="#a86a32" stroke-width="2.500"/></symbol>
<symbol id="grp" viewBox="0 0 16 16"><path d="M1.500 5.500h7v9h-7zM4 3.500h7v9H4zM7.500 1h4v10h-4z" fill="#eee" stroke="#555"/><rect x="9" y="9" width="6.500" height="6.500" rx="1" fill="#5a8c5a"/><path d="M12.200 10v4.500M10 12.200h4.500" stroke="#fff"/></symbol>
<symbol id="eye" viewBox="0 0 16 16"><path d="M.5 8.500Q8 0 15.500 8.500 8 14 .5 8.500z" fill="#f5f5f5" stroke="#777"/><circle cx="8" cy="7.500" r="3" fill="#5d8cc4"/><circle cx="8" cy="7.500" r="1.300" fill="#222"/><path d="M10.500 13h5L13 15.500z" fill="#444"/></symbol>
<symbol id="eps" viewBox="0 0 16 16"><path d="M7.500 2C6 .5 2 .5 2 3s2 2 3 2C3 5 1.500 6 1.500 8s4 2.500 6 .5" fill="none" stroke="#7a3b8c" stroke-width="1.500"/><path d="M9.500 15v-2.500q0-2.500 2.500-2.500t2.500 2.500V15" fill="none" stroke="#999" stroke-width="2"/></symbol>
<symbol id="rst" viewBox="0 0 14 14"><path d="M0 0h14v14H0z" fill="#a9c3e2"/><path d="M0 0h4v4H0zM8 0h3v4H8zM4 4h4v4H4zM11 4h3v4h-3zM0 9h4v5H0zM8 9h3v3H8z" fill="#22395a"/><path d="M4 0h4v4H4zM8 5h3v4H8zM11 11h3v3h-3z" fill="#dfe9f5"/></symbol>
<symbol id="dup" viewBox="0 0 16 16"><path d="M1.500 3.500h11v11h-11z" fill="#999" stroke="#555"/><path d="M4 1.500h10.500v11H4z" fill="#eee" stroke="#777"/><rect x="10" y="10" width="5.500" height="5.500" fill="#d4b52a"/></symbol>
<symbol id="spec" viewBox="0 0 16 16"><path d="M0 2.500h3M13 2.500h3" stroke="#000" stroke-width="1.500"/><ellipse cx="4" cy="4" rx="3.200" ry="2.400" fill="none" stroke="#000" stroke-width="1.300"/><ellipse cx="12" cy="4" rx="3.200" ry="2.400" fill="none" stroke="#000" stroke-width="1.300"/><rect x="9" y="9" width="6.500" height="6.500" rx="1" fill="#5a8c5a"/><path d="M12.200 10v4.500M10 12.200h4.500" stroke="#fff" stroke-width="1.300"/></symbol>
<symbol id="flt" viewBox="0 0 12 12"><rect x=".5" y=".5" width="11" height="11" rx="2.500" fill="none" stroke="#555"/><path d="M5 2.500h4.500V7H5zM2.500 5H7v4.500H2.500z" fill="#efefef" stroke="#555"/></symbol>
<symbol id="cls" viewBox="0 0 12 12"><rect x=".5" y=".5" width="11" height="11" rx="2.500" fill="none" stroke="#555"/><path d="M3 3l6 6M9 3L3 9" stroke="#444" stroke-width="2"/></symbol>
</defs></svg>

<header class="title-strip d-flex align-items-center">
  <svg width="16" height="16" viewBox="0 0 16 16"><circle cx="7.500" cy="7.500" r="5.800" fill="none" stroke="#589632" stroke-width="3.200"/><path d="M8 8h3.500l4 4.500v3h-3L8 11z" fill="#589632" stroke="#fff" stroke-width=".7"/><circle cx="8" cy="7.500" r="1.800" fill="#f08c1f"/></svg>
  <span class="ms-1">*未命名的项目 - QGIS</span>
  <div class="ms-auto d-flex">
    <button class="win-btn" aria-label="最小化"><svg class="mx-auto" width="10" height="10" viewBox="0 0 10 10"><path d="M0 5.500h10" stroke="#000"/></svg></button>
    <button class="win-btn" aria-label="还原"><svg class="mx-auto" width="11" height="11" viewBox="0 0 11 11"><path d="M.5 2.500h8v8h-8zM2.500 2.500v-2h8v8h-2" fill="none" stroke="#000"/></svg></button>
    <button class="win-btn me-1" aria-label="关闭"><svg class="mx-auto" width="11" height="11" viewBox="0 0 11 11"><path d="M.5.5l10 10M10.500.5l-10 10" stroke="#000" stroke-width="1.200"/></svg></button>
  </div>
</header>

<nav class="menu-strip d-flex align-items-center">
  <a href="#">项目(<u>J</u>)</a><a href="#">编辑(<u>E</u>)</a><a href="#">视图(<u>V</u>)</a><a href="#">图层(<u>L</u>)</a><a href="#">设置(<u>S</u>)</a><a href="#">插件(<u>P</u>)</a><a href="#">矢量(<u>O</u>)</a><a href="#">栅格(<u>R</u>)</a><a href="#">数据库(<u>D</u>)</a><a href="#">网络(<u>W</u>)</a><a href="#">网孔(<u>M</u>)</a><a href="#">处理(<u>C</u>)</a><a href="#">帮助(<u>H</u>)</a>
</nav>

<!-- data-tools: "|" grip, "." separator, "_" blank; a+b stacks symbols; ! disabled, > side menu, , corner menu, = pressed -->
<div class="tool-strip d-flex align-items-center">
  <div class="tool-set" data-tools="| page open save lay+star rep sty | hand= pan lens+zin lens+zout lens+full ysq+lens gsq+lens lens+z11! lens+bl1 lens+br1! map+star bkm+star book ref | info+cur act+cur!> sel+cur> form> ysq+no tab aba gear sig rul> tip txt>"></div>
</div>
<div class="tool-strip d-flex align-items-center">
  <div class="tool-set" data-tools="| dsm+plus pkg+star vee+star fea+star chip+star . vbox+star | pens!, pen save+pen2! vee+star! vtx!> att! bin! cut! cpy! pst! undo! redo! | abc pie . abb+thm abr . abc+thm! abc+eye1! abc+mv! abc+rot! abc+pen1! _ | db | msr | py | help _ |"></div>
</div>
<div class="tool-strip d-flex align-items-center">
  <div class="tool-set" data-tools="| tri! vee+mv!> bean+rot! hexs! ringb+star! beans+star! ringb+star! ringb+del! beans+del! resh! offc! vee+rot! spli! scis! scis! merg! mlin! rsym!> | hist! hist+harr! hist! hist+harr! sun+upb! sun+dnb! con+upb! con+dnb!"></div>
  <div class="tool-set snap-set">
    <div class="tool-set" data-tools="| mag vees!, dots!,"></div>
    <div class="spin-box w-snap"><input class="val" aria-label="捕捉容差" value="12" disabled><span class="ends"><i></i><i></i></span></div>
    <div class="spin-box w-unit"><select aria-label="单位" disabled><option>像素</option></select><span class="ends"><i></i></span></div>
    <div class="tool-set" data-tools="topo cross! self!>"></div>
  </div>
</div>
<div class="tool-strip d-flex align-items-center">
  <div class="tool-set" data-tools="| curv+star!> circ+star!> ell+star!> rec+star!> poly+star!> | grn osm"></div>
</div>

<div class="work-area d-flex flex-grow-1">
  <aside class="side-strip flex-shrink-0"><span class="hgrip"></span>
    <div data-tools="vee+plus ras+plus mesh+plus com+plus fea+plus vbox+plus ele+plus> globe+plus> wcs+plus wfs+plus> chip+star>"></div>
  </aside>

  <div class="docks d-flex flex-column flex-shrink-0">
    <section>
      <div class="dock-title d-flex align-items-center"><span class="me-auto">浏览</span><button aria-label="浮动"><svg width="12" height="12"><use href="#flt"/></svg></button><button aria-label="关闭"><svg width="12" height="12"><use href="#cls"/></svg></button></div>
      <div class="dock-tools d-flex align-items-center">
        <button aria-label="添加"><svg width="16" height="16"><use href="#sqp"/></svg></button><button aria-label="刷新"><svg width="16" height="16"><use href="#ref"/></svg></button><button aria-label="过滤"><svg width="16" height="16"><use href="#fun"/></svg></button><button aria-label="折叠"><svg width="16" height="16"><use href="#col"/></svg></button><button aria-label="属性"><svg width="16" height="16"><use href="#infoc"/></svg></button>
      </div>
      <div class="tree-frame tree-browser d-flex flex-column">
        <div class="d-flex flex-grow-1 overflow-hidden">
          <div class="flex-grow-1 overflow-hidden">
            <div class="tree-row"><span class="twist open"></span><svg width="16" height="16"><use href="#fav"/></svg>收藏夹</div>
            <div class="tree-row" style="padding-left:20px"><span class="twist"></span><svg width="16" height="16"><use href="#fold"/></svg>D:\00 工作\10 QGIS\QGIS tutorial Data\QGIS-Training</div>
            <div class="tree-row"><span class="twist"></span><svg width="16" height="16"><use href="#book"/></svg>Spatial Bookmarks</div>
            <div class="tree-row"><span class="twist"></span><svg width="16" height="16"><use href="#home"/></svg>主目录</div>
            <div class="tree-row"><span class="twist"></span><svg width="16" height="16"><use href="#fold"/></svg>C:\</div>
            <div class="tree-row"><span class="twist"></span><svg width="16" height="16"><use href="#fold"/></svg>D:\</div>
            <div class="tree-row"><span class="twist"></span><svg width="16" height="16"><use href="#fold"/></svg>E:\</div>
            <div class="tree-row"><span class="twist"></span><svg width="16" height="16"><use href="#fold"/></svg>G:\</div>
            <div class="tree-row"><span class="twist"></span><svg width="16" height="16"><use href="#fold"/></svg>H:\</div>
            <div class="tree-row"><span class="twist"></span><svg width="16" height="16"><use href="#fold"/></svg>I:\</div>
            <div class="tree-row"><span class="twist"></span><svg width="16" height="16"><use href="#fold"/></svg>J:\</div>
          </div>
          <div class="scroll-v d-flex flex-column flex-shrink-0"><span class="sb up"></span><span class="thumb-v"></span><span class="sb down mt-auto"></span></div>
        </div>
        <div class="scroll-h d-flex flex-shrink-0"><span class="sb lf"></span><span class="thumb-h"></span><span class="sb rt ms-auto"></span><span class="sb-corner"></span></div>
      </div>
    </section>
    <div class="hgrip mx-auto flex-shrink-0"></div>
    <section class="d-flex flex-column flex-grow-1">
      <div class="dock-title d-flex align-items-center"><span class="me-auto">图层</span><button aria-label="浮动"><svg width="12" height="12"><use href="#flt"/></svg></button><button aria-label="关闭"><svg width="12" height="12"><use href="#cls"/></svg></button></div>
      <div class="dock-tools tall d-flex align-items-center flex-shrink-0">
        <button aria-label="样式"><svg width="16" height="16"><use href="#brush"/></svg></button><button aria-label="添加组"><svg width="16" height="16"><use href="#grp"/></svg></button><button aria-label="可见性"><svg width="16" height="16"><use href="#eye"/></svg></button><button aria-label="过滤图例"><svg width="16" height="16"><use href="#fun"/></svg></button><button aria-label="表达式过滤"><svg width="16" height="16"><use href="#eps"/></svg><span class="tri ms-1"></span></button><button aria-label="展开"><svg width="16" height="16"><use href="#exp"/></svg></button><button aria-label="折叠"><svg width="16" height="16"><use href="#col"/></svg></button><button aria-label="移除"><svg width="16" height="16"><use href="#sqm"/></svg></button>
      </div>
      <div class="tree-frame flex-grow-1 position-relative">
        <div class="layer-row on"><span class="twist leaf"></span><input class="tick" type="checkbox" checked aria-label="contours"><svg class="wide-ico" width="16" height="2"><path d="M0 1h16" stroke="#4cb3c0" stroke-width="1"/></svg><b><u>contours</u></b><span class="flagbox"></span></div>
        <div class="layer-row"><span class="twist open"></span><input class="tick" type="checkbox" checked aria-label="elevation"><svg class="small-ico" width="13" height="13"><use href="#rst"/></svg><b>elevation</b><span class="flagbox"></span></div>
        <div class="layer-row"><span class="swatch" style="background:#2b83ba"></span>500.6</div>
        <div class="layer-row"><span class="swatch" style="background:#abdda4"></span>512.1</div>
        <div class="layer-row"><span class="swatch" style="background:#ffffbf"></span>523.5</div>
        <div class="layer-row"><span class="swatch" style="background:#fdae61"></span>535.0</div>
        <div class="layer-row"><span class="swatch" style="background:#d7191c"></span>546.4</div>
        <div class="layer-row"><span class="twist open"></span><input class="tick" type="checkbox" aria-label="elevation"><svg class="small-ico" width="13" height="13"><use href="#rst"/></svg><span class="off-layer">elevation</span><span class="flagbox"></span></div>
        <div class="layer-row"><span class="swatch" style="background:#000"></span>500.2</div>
        <div class="layer-row"><span class="swatch"></span>546.5</div>
        <div class="layer-row"><span class="twist leaf"></span><input class="tick" type="checkbox" aria-label="Boundary"><svg class="wide-ico" width="16" height="16"><path d="M.5.5h15v15H.5z" fill="#729b6f" stroke="#3c5a3a"/></svg><span class="off-layer">Boundary</span><span class="flagbox"></span></div>
        <div class="layer-row"><span class="twist leaf"></span><input class="tick" type="checkbox" aria-label="Arlington"><svg class="wide-ico" width="16" height="16"><circle cx="8" cy="8" r="3" fill="#c5a23b" stroke="#5f4d18"/></svg><span class="off-layer">Arlington</span><span class="flagbox"></span></div>

        <div class="ctx dropdown-menu show" role="menu">
          <button role="menuitem"><span class="slot"><svg width="16" height="16"><use href="#gsq"/><use href="#lens"/></svg></span>缩放到图层范围(<u>Z</u>)</button>
          <button role="menuitem" style="color:#808080"><span class="slot"><svg class="dim" width="16" height="16"><use href="#gsq"/><use href="#lens"/></svg></span>缩放到选中的区域(<u>Z</u>)</button>
          <button role="menuitem"><span class="slot"><svg width="16" height="16"><use href="#spec"/></svg></span>在鹰眼图中显示(<u>S</u>)</button>
          <button role="menuitem"><span class="slot"><input class="tick d-block" type="checkbox" tabindex="-1" aria-label="显示要素数目"></span>显示要素数目</button>
          <button role="menuitem"><span class="slot"></span>复制图层</button>
          <button role="menuitem"><span class="slot"></span>图层重命名(<u>N</u>)</button>
          <hr>
          <button role="menuitem"><span class="slot"><svg width="16" height="16"><use href="#dup"/></svg></span>创建图层副本(<u>D</u>)</button>
          <button role="menuitem"><span class="slot"><svg width="16" height="16"><use href="#sqm"/></svg></span>移除图层(<u>R</u>)...</button>
          <hr>
          <button role="menuitem"><span class="slot"><svg width="16" height="16"><use href="#tab"/></svg></span>打开属性表(<u>O</u>)</button>
          <button role="menuitem"><span class="slot"><svg width="16" height="16"><use href="#pen"/></svg></span>切换编辑状态</button>
          <button role="menuitem"><span class="slot"></span>过滤(<u>F</u>)...</button>
          <button role="menuitem"><span class="slot"></span>Change Data Source...</button>
          <hr>
          <button role="menuitem"><span class="slot"></span>设置图层可见比例(<u>S</u>)</button>
          <button role="menuitem"><span class="slot"></span>设置坐标参照系<span class="sub"></span></button>
          <hr>
          <button role="menuitem"><span class="slot"></span>导出<span class="sub"></span></button>
          <hr>
          <button role="menuitem"><span class="slot"></span>样式<span class="sub"></span></button>
          <button role="menuitem" class="hot"><span class="slot"></span>属性...(<u>P</u>)</button>
        </div>
      </div>
    </section>
  </div>

  <div class="splitter"><svg width="3" height="18"><path d="M1 0v18" stroke="#aaa" stroke-width="1" stroke-dasharray="1 2"/></svg></div>

  <main class="canvas-frame flex-grow-1">
    <svg id="mapview" width="100%" height="100%" viewBox="449 203 1470 927" preserveAspectRatio="xMidYMin slice" role="img" aria-label="高程与等高线"></svg>
  </main>
</div>

<footer class="status-strip d-flex align-items-center flex-shrink-0">
  <label class="find-box d-flex align-items-center"><svg width="14" height="14" viewBox="0 0 14 14"><circle cx="5.500" cy="5.500" r="4.200" fill="none" stroke="#888" stroke-width="1.500"/><path d="M9 9l4 4" stroke="#888" stroke-width="2"/></svg><input type="text" placeholder="键入以定位(Ctrl+K)" aria-label="定位"></label>
  <span style="margin-left:9px">切换当前图层的编辑状态</span>
  <label class="ms-auto me-1" for="coord">坐标</label>
  <div class="spin-box w-coord"><input id="coord" class="val" value="2348086,6936961"></div>
  <svg class="ms-1" width="16" height="16" viewBox="0 0 16 16"><path d="M3 3l4-2 7 9-2 5-5-1z" fill="#ddd" stroke="#333" stroke-width="1.500"/><path d="M2 2l10 11M15 1L8 8M3 8l5 6" stroke="#222" stroke-width="1.200"/></svg>
  <label class="me-1" style="margin-left:13px" for="scale">比例尺</label>
  <div class="spin-box w-scale"><select id="scale" class="val"><option>1:25398</option></select><span class="ends"><i></i></span></div>
  <svg style="margin:0 8px 0 12px" width="13" height="16" viewBox="0 0 13 16"><path d="M3 8V4.500a3.500 3.500 0 0 1 7 0V8" fill="none" stroke="#777" stroke-width="1.600"/><path d="M.5 7.500h12v8H.5z" fill="#555"/></svg>
  <label class="me-1" for="magn">放大镜</label>
  <div class="spin-box w-mag"><input id="magn" class="val" value="100%"><span class="ends"><i></i><i></i></span></div>
  <label style="margin:0 9px" for="rota">旋转角度</label>
  <div class="spin-box w-rot"><input id="rota" class="val" value="0.0°"><span class="ends"><i></i><i></i></span></div>
  <input class="tick" style="margin:0 6px 0 7px" type="checkbox" id="rend" checked><label for="rend">渲染</label>
  <svg style="margin:0 4px 0 17px" width="14" height="14" viewBox="0 0 14 14"><circle cx="7" cy="7" r="6" fill="#ccc" stroke="#555"/><path d="M1 5h12M1 9h12M7 1v12M7 1c-4 4-4 8 0 12M7 1c4 4 4 8 0 12" fill="none" stroke="#555"/></svg>
  <span class="val">EPSG:2276</span>
  <svg style="margin:0 7px 0 24px" width="16" height="16" viewBox="0 0 16 16"><path d="M8 1a7 6.500 0 1 0 4 12l3 2-1-4A6.500 6.500 0 0 0 8 1z" fill="#555"/><path d="M4 6h8M4 9h6" stroke="#fff" stroke-dasharray="3 1"/></svg>
  <span class="mark-text">https://blog.csdn.net/QGISClass</span>
</footer>

<script src="https://cdn.jsdelivr.net/npm/bootstrap@5.3.0/dist/js/bootstrap.bundle.min.js"></script>
<script>
/* toolbars */
document.querySelectorAll('[data-tools]').forEach(bar => {
  bar.innerHTML = bar.dataset.tools.trim().split(/\s+/).map((t, n) => {
    if (t === '|') return `<span class="grip${n ? '' : ' first'}"></span>`;
    if (t === '.') return '<span class="bar-gap"></span>';
    if (t === '_') return '<span class="tool-space"></span>';
    const off = t.includes('!'), side = t.includes('>'), corner = t.includes(','), down = t.includes('=');
    const ids = t.replace(/[!>,=]/g, '').split('+');
    return `<button class="tool${side ? ' with-menu' : ''}${down ? ' pressed' : ''}" aria-label="${ids[0]}">` +
      `<svg class="${off ? 'dim' : ''}" width="24" height="24">${ids.map(i => `<use href="#${i}"/>`).join('')}</svg>` +
      (side ? `<span class="tri${off ? ' pale' : ''}"></span>` : '') + (corner ? '<span class="tri corner pale"></span>' : '') + '</button>';
  }).join('');
});

/* map: three survey sheets at 3 units per pixel, each with its own origin */
const sheet = {A: [420, 0], B: [0, 975], C: [0, 1635]};
const pts = src => src.trim().split(/\s+/).reduce((o, w) => {
  if (sheet[w]) o.k = sheet[w];
  else { const [x, y] = w.split(','); o.p.push((+x + o.k[0]) + ' ' + (+y + o.k[1])); }
  return o;
}, {k: sheet.A, p: []}).p;
const line = s => 'M' + pts(s).join('L');
const shore = `A 1257,365 1262,380 1290,390 1302,410 1300,430 1317,437 1305,452 1280,450 1265,475 1252,510 1245,545 1190,552 1140,580 1108,600 1090,615 1067,612 1068,580 1005,562 1003,600 1006,618 985,615 965,600 930,615 905,640 850,662 848,690 862,740 878,762 858,790 865,830 862,860 900,910 930,970
B 1360,0 1380,60 1413,130 1410,185 1378,235 1368,260 1370,355 1350,382 1330,365 1315,352 1270,350 1220,385 1140,450 1090,505 1045,560 1030,590 1028,650 1010,690 985,708 967,708 967,735 988,755 985,767 965,755 960,710 935,705 918,720 920,745 950,790 925,775 905,738 860,755 800,770 758,800 745,760 730,750 705,755 697,790 682,800 695,870 675,840 520,840 500,860 498,900 506,960
C 505,300 497,350 465,385 432,430 428,480 412,530 395,610 350,690 338,722 365,730 335,735 300,795 285,870 265,882 170,882 172,893 235,897 238,905 200,935 195,960 210,1010 210,1050 185,1105 130,1145 80,1130 42,1040 60,990 70,935 100,895 150,875 170,830 200,770 200,720 185,655 180,600 190,560 180,540 155,530 122,530 98,500 105,425 78,435 90,422 130,405 133,350 122,290 95,255 78,240 82,232 45,228 82,222 82,120 60,60 33,30
B 35,660 70,590 105,520 150,512 280,500 340,470 350,458 365,465 360,480 395,440 425,415 460,415 520,428 535,412 570,430 650,438 690,400 740,335 770,300 782,270 775,258 750,255 730,220 680,180 650,140 660,90 690,40
A 265,1015 310,980 365,955 360,930 330,910 280,915 215,925 196,968 190,945 170,932 140,935 115,950 85,965 100,990 105,1010 85,1025 75,1045 50,1055 35,1030 60,1040 75,1010 55,1005 70,985 42,985 42,960 45,940 20,920 50,930 90,890 130,872 175,865 210,848 165,835 130,828 85,820 60,820 42,798 55,780 95,785 100,760 115,775 145,775 165,745 200,725 215,650 190,615 195,600 145,600 165,572 190,570 215,530 197,500 210,480 250,488 257,435 302,395 285,430 267,465 290,488 355,490 378,465 385,420 420,355 465,320 452,308 490,275 465,240 535,170 555,183 580,185 600,152 635,115 650,65 690,30 700,15`;
const S = line(shore), outline = S + 'L' + pts('A 820,15').join('') + 'Z';
const blob = (c, b, s) => `<path d="${line(s)}Z" fill="${c}" filter="url(#f${b})"/>`;
const tint = [
  ['#fdb76a', 24, 'A 60,0 1300,0 1400,600 900,700 900,900 B 1400,300 1000,560 700,650 500,560 300,640 100,640 150,540 600,450 650,100 A 0,950'],
  ['#f08048', 24, 'B 60,640 300,640 500,700 600,600 700,680 900,620 1060,560 1050,900 600,900 C 450,500 300,900 0,1200 0,200'],
  ['#fee09a', 24, 'A 380,860 330,860 380,960 B 860,60 840,180 880,330 760,390 560,490 560,540 820,520 960,490 1120,380 1240,300 1250,200 1330,100 A 860,900 780,700'],
  ['#fffdbd', 18, 'A 770,15 1250,395 1215,480 1100,520 1000,500 890,590 800,640 785,700 800,800 850,880 880,1050 B 1290,130 1200,230 1150,310 1080,360 980,340 940,250 950,100 840,20 A 420,1040 385,930 345,800 370,740 432,680 425,600 330,570 230,555 290,535 370,530 450,430 505,310 500,260 560,240 640,190 690,110'],
  ['#e4f2b4', 24, 'A 800,50 700,170 600,290 530,450 440,540 440,720 500,850 560,1000 B 1030,100 1080,240 1170,100 1210,0 A 790,900 760,740 720,650 850,600 980,480 1210,430'],
  ['#cbe7ac', 24, 'A 800,80 640,290 540,450 470,560 480,720 600,860 680,800 660,650 850,580 980,470 1200,430'],
  ['#abdda4', 18, 'A 820,60 1215,385 1180,445 990,455 880,530 780,585 640,575 600,640 570,560 580,450 620,350 680,280 690,200 760,110'],
  ['#84bfa8', 13, 'A 880,100 1200,365 1200,420 1070,410 960,430 860,450 760,420 680,360 690,250 770,215 850,200'],
  ['#60a6b0', 18, 'A 780,290 860,210 970,190 1110,300 1100,370 1000,400 860,410 760,370'],
  ['#418fba', 13, 'A 820,290 870,245 960,235 1020,265 1040,350 960,330 850,340'],
  ['#6fb0a8', 6, 'A 670,185 690,120 745,105 750,150 700,190'],
  ['#2b83ba', 3, 'A 697,155 703,120 725,115 735,130 718,160'],
  ['#84bfa8', 6, 'A 740,520 800,420 770,510 740,550'],
  ['#9ccfa6', 6, 'A 660,520 700,500 700,530 670,540'],
  ['#c8e4a8', 6, 'A 600,750 620,600 640,700 625,880'],
  ['#9ccfa6', 6, 'A 700,440 760,340 740,420 690,480'],
  ['#84bfa8', 6, 'A 800,470 930,400 880,440 820,480'],
  ['#4b97b4', 6, 'A 1160,430 1200,400 1180,430'],
  ['#b9e2a8', 6, 'A 760,180 810,120 850,100 860,150 820,200'],
  ['#4b97b4', 6, 'A 970,420 1000,340 1050,350 1010,390']
].map(t => blob(...t)).join('');
const over = [
  ['#fdb76a', 13, 'B 720,60 800,30 830,70 830,250 870,340 780,370 740,200 690,120'],
  ['#e23a2a', 3, 'A 290,585 335,585 345,615 385,600 412,600 412,650 350,690 320,790 250,833 225,800 262,740 270,640'],
  ['#e95b3a', 6, 'A 350,640 320,670 330,700 280,740 300,690'],
  ['#ea6240', 6, 'A 60,790 200,740 215,760 200,820 110,820'],
  ['#ee7645', 6, 'A 60,960 130,880 240,870 200,920 100,940'],
  ['#fdb366', 6, 'A 220,560 270,520 400,545 300,560 250,580 250,700 200,760 230,640'],
  ['#fdbc6f', 13, 'B 140,600 250,530 420,490 600,480 540,620 380,650 300,610 160,650'],
  ['#ec6a42', 6, 'B 100,800 210,640 230,650 150,800'],
  ['#ec6a42', 6, 'B 200,760 270,640 310,640 230,760'],
  ['#de3d2c', 6, 'B 305,690 380,665 435,680 455,720 400,760 350,830 325,760 300,730'],
  ['#e2452f', 18, 'C 130,160 200,105 270,150 340,170 400,280 485,240 480,370 420,420 320,400 240,350 180,320 170,260 120,260'],
  ['#e04430', 18, 'B 790,770 960,650 1040,560 1040,720 900,760'],
  ['#e95b3a', 13, 'B 560,650 600,580 640,600 610,700 560,740'],
  ['#e95b3a', 24, 'B 700,760 840,680 1000,640 960,740'],
  ['#fdb265', 6, 'C 505,0 550,0 530,80 480,110'],
  ['#f79a55', 13, 'C 380,160 450,60 490,100 470,180 430,260 370,230'],
  ['#e8603c', 6, 'B 570,820 660,740 650,800 600,830'],
  ['#fdbb6f', 6, 'C 135,300 175,300 180,370 240,400 240,470 200,485 135,430'],
  ['#fdb468', 13, 'C 285,500 330,430 380,400 390,520 340,560 280,620'],
  ['#fda45c', 18, 'C 280,600 350,560 320,760 270,740'],
  ['#df3a2b', 6, 'C 220,500 250,490 240,580 220,570'],
  ['#e0402d', 6, 'C 190,660 250,690 250,740 205,800 195,740'],
  ['#fdbb6f', 6, 'C 218,800 258,768 290,800 270,880 215,875'],
  ['#ffffbf', 3, 'C 232,810 255,785 270,810 265,865 228,862'],
  ['#dd3128', 18, 'C 120,920 180,940 205,1020 160,1110 90,1110 60,1030 120,1020']
].map(t => blob(...t)).join('');
const contours = `A 720,115 738,118 738,138 708,166 690,158 700,125 720,115
A 803,290 830,262 860,240 910,236 960,230 1010,240 1022,265 1018,300 1002,335 985,305 940,320 910,330 850,348 830,340 825,315 803,290
A 1003,330 1025,322 1067,332 1060,350 1040,345 1020,365 1008,340 1003,330
A 700,100 780,90 800,50 830,55 875,90 1010,200 1150,320 1195,370 1200,400 1160,405 1165,435 1155,405 1120,405 1090,415 1060,390 1030,405 1025,365 1028,405 965,420 965,435 945,420 900,430 930,445 905,440 860,445 880,405 840,395 780,425 745,395 730,340 690,370 695,335 680,290 690,270 740,235 760,212 800,215 830,220 850,180 870,140 872,100
A 840,400 800,470 745,548 745,500 770,470 820,400 840,400
A 700,80 655,150 650,210 600,280 560,350 525,420 520,455 540,460 535,475 510,470 440,540 425,600 430,720 470,780 520,840 545,910 575,915 590,880 610,930 628,1005 628,900 640,910 645,900 660,905 670,925 675,905 685,930 690,915 695,935 700,900 710,910 715,890 730,890 740,870 750,875 760,800 762,850 770,815 770,850 768,800 750,755 715,730 685,690 700,640 745,665 800,630 900,560 985,480 1010,480 1080,490 1130,520 1200,470 1240,420 1250,390
A 715,200 670,250 655,215 720,205 650,280 620,330 620,400 580,460 575,560 595,620 600,755 625,640 640,590 700,600 715,580 755,600 850,580 880,550 960,470 1000,458 1130,460 1190,430 1235,395
A 560,590 575,510 580,540 550,585
A 640,450 690,390
A 600,420 625,400 615,425 600,420
A 640,1050 640,960 655,980 650,1050
A 440,600 438,680 390,690 375,740 350,800 395,880 395,960 430,1000 445,1050 460,1020 500,1050
B 850,20 860,70 880,50 930,90 960,100 935,160 942,245 930,260 928,310 890,370 890,410 930,350 975,355 978,385 1010,312 1065,315 1068,350 1090,365 1140,330 1200,220 1210,175 1280,75 1285,0
B 1055,0 1055,80 1070,80 1075,20
B 1113,90 1120,95 1117,135 1111,125 1113,90
B 690,120 720,60 800,35 815,70 812,120 845,190 853,260 880,260 880,310 865,365 800,375 775,420 740,420 680,440 655,470 600,475 580,480 540,540 545,565 585,545 600,570 640,530 700,530 810,545 930,528 1000,480 1060,460 1110,400 1160,380 1180,350 1240,320 1232,260 1290,200 1295,110 1315,60 1310,0
B 690,120 740,160 755,195 795,205 800,270
B 540,455 490,490 420,480 360,500 240,540 200,585 130,605 135,640 165,655 230,640 310,570 280,600 310,640 330,630 370,655 430,658 485,630 510,690 485,745 485,780 500,760 535,740 540,680 580,620 590,580 635,590 620,660 660,600 690,640 745,660 790,650 830,600 930,605 960,590 1000,520 1060,480 1130,410 1240,330 1270,320 1310,250 1340,180 1338,80 1330,0
B 300,680 350,665 430,670 458,715 430,750 380,800 350,870 370,920 410,940 460,910 475,880
B 300,680 300,740 340,790 335,830 265,795 205,770 180,790 135,840 170,825 135,870 130,920
B 75,670 105,600 230,520 360,498 400,455 500,455 560,440 650,450 740,380
B 75,670 100,740 98,800 130,810 90,850 98,900 130,920
B 150,770 160,720 180,705 150,770
B 740,755 820,705 880,665 940,655 1000,590 1050,530
B 570,800 620,750 668,735 660,770 640,795 610,825 500,845
B 720,495 725,455 735,465 720,495
B 822,415 835,405 840,420 822,415
B 530,635 555,610 565,560 560,630 530,635
B 340,905 355,925 345,935 340,905
C 130,265 175,272 178,340 200,345 260,365 290,390 270,430 265,460 235,490
C 140,300 172,300 175,370 235,400 240,460 200,485 150,465 133,430 140,300
C 230,340 235,290 245,340 230,340
C 260,480 300,420 370,385 400,410 425,450
C 290,500 330,420 375,400 390,460 380,540 340,530 320,580 300,560 280,625 275,490 260,480
C 220,500 245,490 235,530 245,580 222,570
C 115,515 120,465 145,515 185,520 195,610 215,665 255,690 255,750 290,790 270,870 225,870 215,800 205,800 235,725
C 220,800 255,770 290,800
C 230,815 258,788 272,815 265,865 228,860 230,815
C 238,820 255,800 262,820 240,855 238,820
C 465,235 485,270 475,360 445,370 425,410
C 50,1020 110,1015 130,955 105,940 140,930 155,890 165,940 190,970 200,1020
C 60,990 70,935 100,895 125,885 200,905
C 175,1080 195,1040 175,1070
C 130,1135 155,1100
A 290,545 370,555 400,580 430,600 432,660
A 285,540 350,520 400,490 440,420 515,320 510,270 560,245 640,210 690,130
A 275,620 290,660 340,688 270,660 300,720 265,740 300,725
A 240,860 270,858 260,870 240,860
A 230,830 240,810 260,820 230,830
A 480,245 550,175`.split('\n').map(l => `<path d="${line(l)}"/>`).join('');
const ring = (n, w) => `<mask id="m${n}" maskUnits="userSpaceOnUse" x="-100" y="-100" width="2100" height="3100"><path d="${S}" fill="none" stroke="#fff" stroke-width="${w}" stroke-linejoin="round"/><path d="${S}" fill="none" stroke="#000" stroke-width="${w - 6}" stroke-linejoin="round"/></mask>`;
document.getElementById('mapview').innerHTML = `
<defs>${[3, 6, 13, 18, 24].map(b => `<filter id="f${b}" x="-40%" y="-40%" width="180%" height="180%"><feGaussianBlur stdDeviation="${b}"/></filter>`).join('')}
<filter id="rough" filterUnits="userSpaceOnUse" x="449" y="190" width="1470" height="960"><feTurbulence type="fractalNoise" baseFrequency=".18" numOctaves="2" seed="4"/><feDisplacementMap in="SourceGraphic" scale="4" xChannelSelector="R" yChannelSelector="G"/></filter>
<clipPath id="lake"><path d="${outline}"/></clipPath>
<clipPath id="north"><path d="M0 0H2000V1560L1100 1620L700 1450L0 1900z"/></clipPath>${ring(1, 40)}${ring(2, 66)}</defs>
<g filter="url(#rough)"><g transform="translate(900 195) scale(.33333)"><g clip-path="url(#lake)">
<path d="${outline}" fill="#fdae61"/>${tint}${over}
<g clip-path="url(#north)"><path d="${S}" fill="none" stroke="#fba35a" stroke-width="72" filter="url(#f6)"/></g>
<path d="${S}" fill="none" stroke="#ec6640" stroke-width="30" opacity=".7" filter="url(#f6)"/>
<g clip-path="url(#north)"><path d="${S}" fill="none" stroke="#e03a28" stroke-width="36" filter="url(#f6)"/></g>
<path d="${line('A 820,15 1257,365')}" stroke="#f3a868" stroke-width="8"/>
<path d="${line('A 815,25 1250,375')}" stroke="#b9e8c0" stroke-width="12" filter="url(#f3)"/>
<g clip-path="url(#north)" fill="#8fdcc4" opacity=".65">${[1, 2].map(n => `<path mask="url(#m${n})" d="M-50-50H1900V3000H-50z"/>`).join('')}</g>
<g fill="none" stroke="#74e4d2" stroke-width="3.500" stroke-linejoin="round" opacity=".9">${contours}
<path d="${line('A 810,20 1000,180 1250,380 1310,440')}"/><path d="${line('A 828,20 1010,170 1257,365')}"/><path d="${line('A 790,30 830,42 1100,275 1230,375')}"/></g>
</g></g></g>`;
</script>
</body>
</html>
